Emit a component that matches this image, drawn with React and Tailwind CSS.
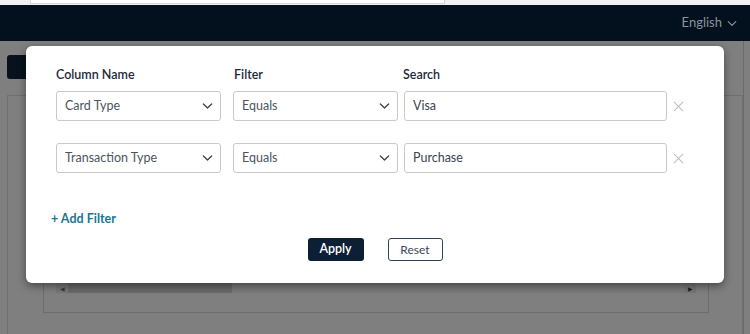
import React from "react";

const font = { fontFamily: "Lato, 'Open Sans', sans-serif" };

function Chevron({ className = "" }) {
  return (
    <svg viewBox="0 0 12 8" className={className} fill="none" stroke="currentColor" strokeWidth="1.4">
      <path d="M1.5 1.8 6 6.2l4.5-4.4" strokeLinecap="round" strokeLinejoin="round" />
    </svg>
  );
}

function Cross() {
  return (
    <svg viewBox="0 0 12 12" className="w-[11px] h-[11px] shrink-0 text-[#bdbdbd]" fill="none" stroke="currentColor" strokeWidth="1.1">
      <path d="M1 1l10 10M11 1L1 11" />
    </svg>
  );
}

function Select({ value, className = "" }) {
  return (
    <div className={`w-[165px] h-[30px] flex items-center justify-between pl-[8px] pr-[7px] border border-[#c9c9c9] rounded-[3px] bg-white text-[12.5px] text-[#4b5560] ${className}`}>
      <span>{value}</span>
      <Chevron className="w-[11px] h-[8px] text-[#3a3f45]" />
    </div>
  );
}

function FilterRow({ column, filter, search }) {
  return (
    <div className="flex items-center">
      <Select value={column} />
      <Select value={filter} className="ml-[12px]" />
      <div className="ml-[6px] w-[263px] h-[30px] flex items-center pl-[8px] border border-[#c9c9c9] rounded-[3px] bg-white text-[12.5px] text-[#3b4450]">
        {search}
      </div>
      <div className="ml-[6px] flex items-center"><Cross /></div>
    </div>
  );
}

export default function App() {
  return (
    <div className="relative w-[750px] h-[334px] overflow-hidden bg-[#7f7f7f]" style={font}>
      {/* browser strip */}
      <div className="h-[5px] bg-[#f1f1f1] flex">
        <div className="ml-[30px] w-[415px] h-[4px] bg-white border-b border-x border-[#d6d6d6]" />
      </div>
      {/* navbar */}
      <div className="h-[36px] bg-[#03101d] flex items-center justify-end pr-[13px]">
        <span className="text-[13px] text-[#8b939c] flex items-center gap-[5px]">
          English <Chevron className="w-[10px] h-[7px] text-[#8b939c]" />
        </span>
      </div>
      {/* page behind overlay */}
      <div className="px-[7px] pt-[14px]">
        <div className="w-[40px] h-[24px] rounded-[3px] bg-[#07121c]" />
        <div className="mt-[16px] h-[260px] border border-[#6f6f6f] bg-[#7f7f7f] pt-[186px] pl-[35px] pr-[33px]">
          <div className="h-[31px] border-b border-x border-[#6d6d6d] px-[12px] pt-[1px]">
            <div className="flex items-center h-[10px] bg-[#7b7b7b]">
              <div className="w-[12px] h-[10px] bg-[#777] flex items-center justify-center text-[#3a3a3a] text-[6px]">◀</div>
              <div className="w-[164px] h-[10px] bg-[#6a6a6a]" />
              <div className="flex-1" />
              <div className="w-[12px] h-[10px] bg-[#777] flex items-center justify-center text-[#1f1f1f] text-[6px]">▶</div>
            </div>
          </div>
        </div>
      </div>
      <div className="absolute top-[41px] right-[6px] w-px h-[293px] bg-[#6b6b6b]" />

      {/* modal */}
      <div className="absolute left-[26px] top-[46px] w-[698px] h-[237px] bg-white rounded-[6px] shadow-[0_3px_8px_rgba(0,0,0,0.45)] pl-[30px] pt-[21px]">
        <div className="flex text-[12.5px] font-semibold text-[#1c2a3a] h-[16px] leading-[16px]">
          <span className="w-[178px]">Column Name</span>
          <span className="w-[169px]">Filter</span>
          <span>Search</span>
        </div>
        <div className="mt-[8px] flex flex-col gap-[22px]">
          <FilterRow column="Card Type" filter="Equals" search="Visa" />
          <FilterRow column="Transaction Type" filter="Equals" search="Purchase" />
        </div>
        <div className="mt-[38px] -ml-[5px] text-[12.5px] font-bold text-[#1b7591] leading-[16px]">+ Add Filter</div>
        <div className="mt-[11px] -ml-[30px] flex justify-center gap-[24px]">
          <button className="w-[56px] h-[23px] rounded-[3px] bg-[#0c1f35] text-white text-[12.5px] font-semibold">Apply</button>
          <button className="w-[55px] h-[23px] rounded-[3px] bg-white border border-[#2e4358] text-[#3a4654] text-[12px]">Reset</button>
        </div>
      </div>
    </div>
  );
}
